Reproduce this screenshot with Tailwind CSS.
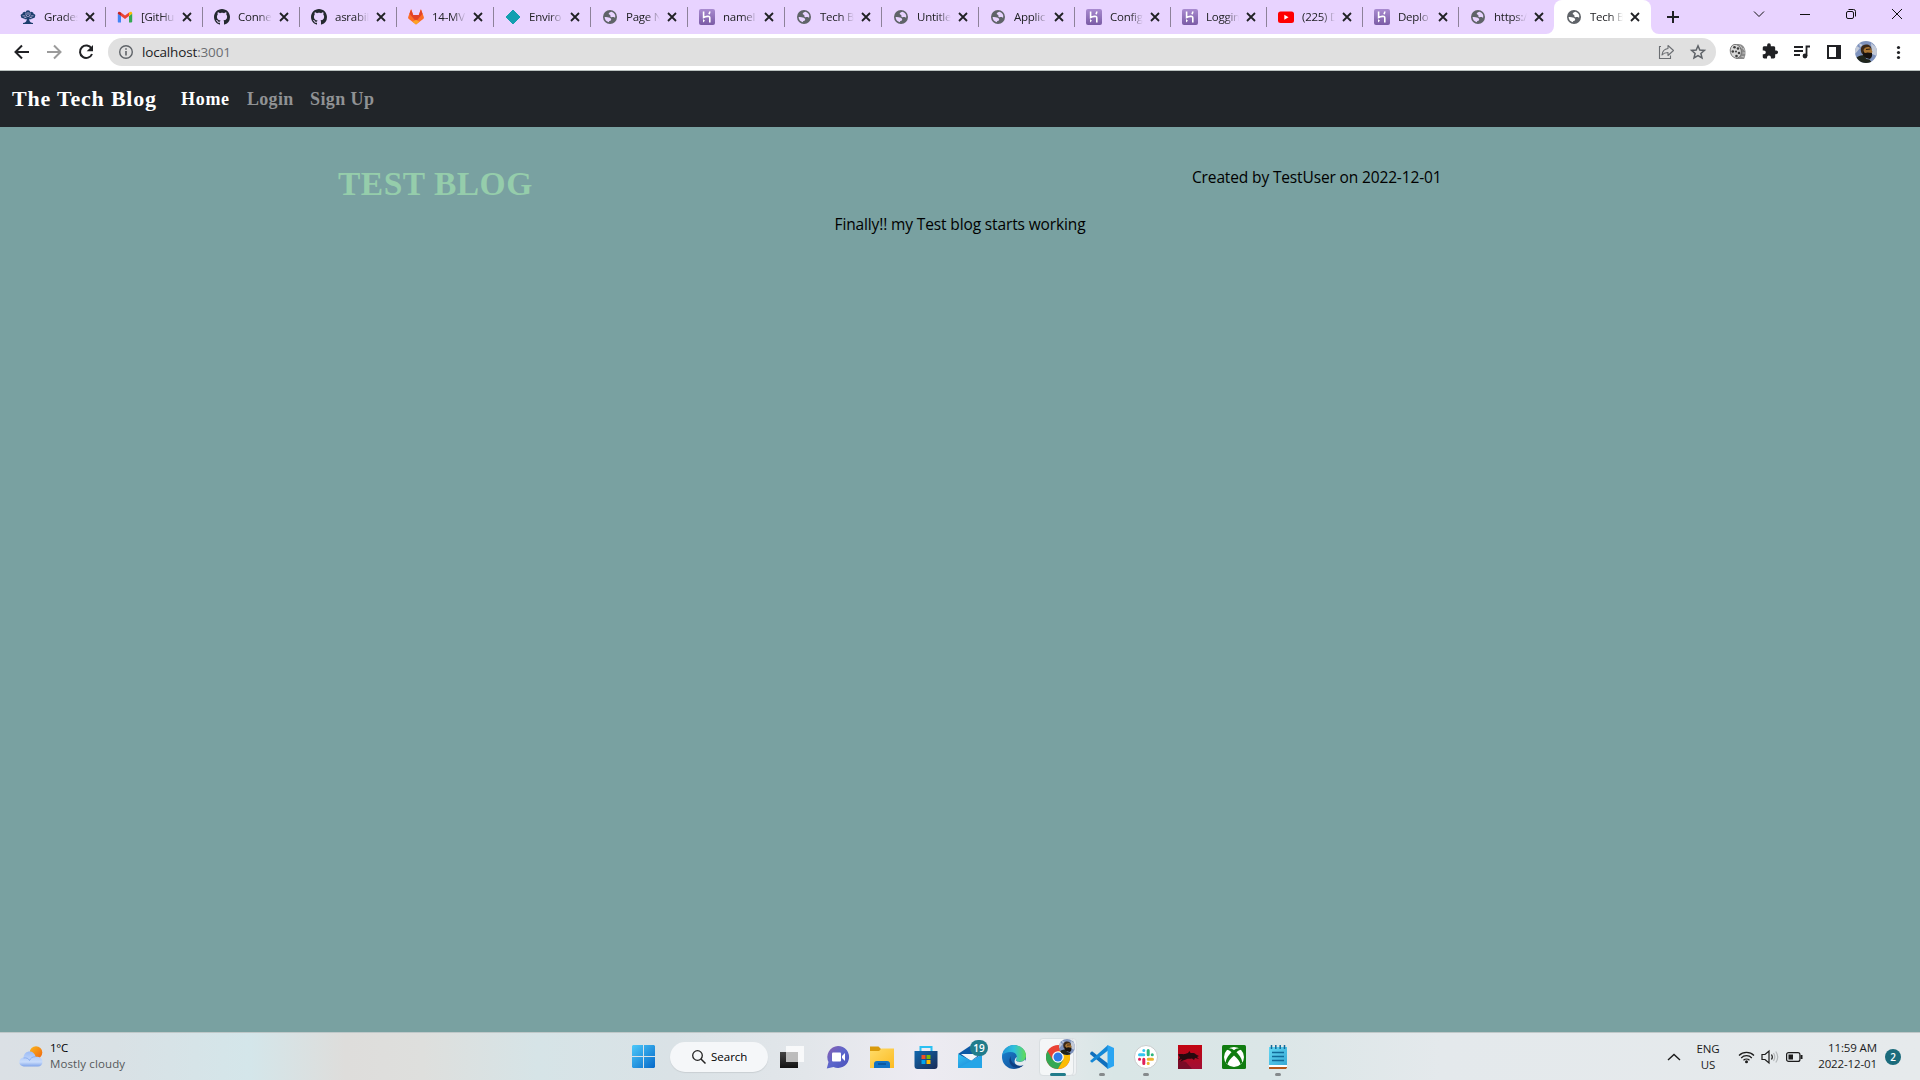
<!DOCTYPE html>
<html lang="en">
<head>
<meta charset="utf-8">
<title>Tech Blog</title>
<script src="https://cdn.jsdelivr.net/npm/@tailwindcss/browser@4"></script>
</head>
<body class="relative flex h-screen w-screen flex-col overflow-hidden bg-[#79a1a1] font-['Open_Sans','Noto_Sans',sans-serif] text-black">

<svg class="absolute size-0">
  <defs>
    <linearGradient id="hk" x1="0" y1="0" x2="0" y2="1"><stop offset="0" stop-color="#a98bd0"/><stop offset="1" stop-color="#7a5ba5"/></linearGradient>
    <linearGradient id="win" x1="0" y1="0" x2="1" y2="1"><stop offset="0" stop-color="#4cc9fa"/><stop offset="1" stop-color="#0669c9"/></linearGradient>
    <linearGradient id="sun" x1="0" y1="0" x2="1" y2="1"><stop offset="0" stop-color="#fbb81c"/><stop offset="1" stop-color="#f0640f"/></linearGradient>
    <linearGradient id="cloud" x1="0" y1="0" x2="0" y2="1"><stop offset="0" stop-color="#9dbcf5"/><stop offset=".7" stop-color="#c9dcfb"/><stop offset="1" stop-color="#7fa3ea"/></linearGradient>
    <linearGradient id="dark" x1="0" y1="0" x2="0" y2="1"><stop offset="0" stop-color="#454545"/><stop offset="1" stop-color="#111"/></linearGradient>
    <linearGradient id="chat" x1="0" y1="0" x2="1" y2="1"><stop offset="0" stop-color="#8d5fae"/><stop offset=".5" stop-color="#5b66cc"/><stop offset="1" stop-color="#4a50b8"/></linearGradient>
    <linearGradient id="fold" x1="0" y1="0" x2="1" y2="1"><stop offset="0" stop-color="#ffdc6a"/><stop offset="1" stop-color="#fcbb22"/></linearGradient>
    <linearGradient id="store" x1="0" y1="0" x2="1" y2="1"><stop offset="0" stop-color="#0f67ae"/><stop offset="1" stop-color="#1b2c56"/></linearGradient>
    <linearGradient id="mail" x1="0" y1="0" x2="1" y2="1"><stop offset="0" stop-color="#35c3f2"/><stop offset="1" stop-color="#1377d3"/></linearGradient>
    <linearGradient id="edge1" x1="0" y1="0" x2="1" y2="0"><stop offset="0" stop-color="#2196d8"/><stop offset=".5" stop-color="#2fc0dc"/><stop offset="1" stop-color="#62dc51"/></linearGradient>
    <linearGradient id="edge2" x1="0" y1="0" x2="1" y2="1"><stop offset="0" stop-color="#1a86d4"/><stop offset="1" stop-color="#11468f"/></linearGradient>
    <linearGradient id="note" x1="0" y1="0" x2="1" y2="1"><stop offset="0" stop-color="#62d7f3"/><stop offset="1" stop-color="#37a8d4"/></linearGradient>
    <linearGradient id="red" x1="0" y1="0" x2="0" y2="1"><stop offset="0" stop-color="#c40410"/><stop offset="1" stop-color="#a00f35"/></linearGradient>
    <clipPath id="round"><circle cx="11" cy="11" r="11"/></clipPath>
  </defs>
  <symbol id="i-globe" viewBox="0 0 16 16"><path fill="#5f6368" fill-rule="evenodd" d="M8 1a7 7 0 1 0 0 14A7 7 0 0 0 8 1zM9.600 2.700C8.300 3.100 6.800 3.600 6.700 4.800c0 1 1.100.8 1.600 1.400.4.600-.2 1.400.5 1.900.9.500 1.900-.3 2.800 0 .6.200.9.700 1.600.500A5.400 5.400 0 0 0 9.600 2.700zM2.600 8c0 2.600 1.800 4.800 4.500 5.300V12c.8-.2 1.700-.3 2-1.100.3-.9-.3-1.800-1.300-2.200C6.500 8.200 5 8.400 2.600 8z"/></symbol>
  <symbol id="i-git" viewBox="0 0 16 16"><path fill="#24292f" d="M8 0C3.58 0 0 3.58 0 8c0 3.54 2.290 6.530 5.470 7.590.4.070.55-.17.55-.38 0-.19-.01-.82-.01-1.490-2.010.37-2.530-.49-2.690-.94-.09-.23-.48-.94-.82-1.130-.28-.15-.68-.52-.01-.53.63-.01 1.080.58 1.230.82.72 1.210 1.870.87 2.330.66.07-.52.28-.87.51-1.070-1.780-.2-3.640-.89-3.640-3.950 0-.87.31-1.590.82-2.150-.08-.2-.36-1.020.08-2.120 0 0 .67-.21 2.200.82.64-.18 1.320-.27 2-.27.68 0 1.360.09 2 .27 1.530-1.040 2.200-.82 2.200-.82.44 1.100.16 1.920.08 2.120.51.56.82 1.270.82 2.150 0 3.070-1.870 3.750-3.650 3.950.29.25.54.73.54 1.480 0 1.070-.01 1.930-.01 2.200 0 .21.15.46.55.38A8.010 8.010 0 0 0 16 8c0-4.420-3.580-8-8-8z"/></symbol>
  <symbol id="i-heroku" viewBox="0 0 16 16"><rect width="16" height="16" rx="2" fill="url(#hk)"/><path d="M4.600 2.500v6c1.500-.8 6.200-2.300 6.200.3v4.700M10.800 2.500c0 1.100-.4 2-1 2.600" fill="none" stroke="#fff" stroke-width="1.600"/><path d="M4 10v3.500L6 11.750z" fill="#fff"/></symbol>
  <symbol id="i-tree" viewBox="0 0 16 16"><path fill="#1d3f6e" d="M5.800 3a2.200 1.800 0 0 1 4.400 0 2.300 1.500 0 0 1 3.300 1.700C15.200 5 15.800 6.300 15 7.300c.2 1.300-.9 2-2.300 1.900-.9 1.300-2.400 1.300-3.400.5.1 2.600.4 3.500 3.700 4.300v1H3v-1c3.300-.8 3.600-1.700 3.700-4.300-1 .8-2.500.8-3.400-.5C1.900 9.300.8 8.600 1 7.300.2 6.300.8 5 2.500 4.700A2.300 1.500 0 0 1 5.800 3z"/><path d="M6 3.500v2.200L7.600 8M10 3.500v2.200L8.400 8M2.500 6.800l3 .2M13.500 6.800l-3 .2M4 9l2.500-.8M12 9l-2.500-.8M8 3v3" stroke="#c9bde2" stroke-width=".8" fill="none"/></symbol>
  <symbol id="i-gmail" viewBox="0 0 16 16"><path fill="#4285f4" d="M1 13.500h3V7L.8 4.500v8.200z"/><path fill="#34a853" d="M12 13.500h2.500l.7-.8V4.500L12 7z"/><path fill="#ea4335" d="M4 7V3.500l4 3 4-3V7l-4 3z"/><path fill="#c5221f" d="M.8 4.700C.8 2.700 2.500 2.200 4 3.500V7L.8 4.700z"/><path fill="#fbbc04" d="M15.200 4.700c0-2-1.700-2.500-3.200-1.200V7l3.200-2.300z"/></symbol>
  <symbol id="i-gitlab" viewBox="0 0 16 16"><path fill="#fc6d26" d="M8 15.500.5 9.700C0 9.200 0 8.500.2 8L2.800.8c.1-.3.500-.3.600 0L5.200 6h5.600L12.600.8c.1-.3.500-.3.600 0L15.800 8c.2.500.2 1.200-.3 1.700z"/><path fill="#e24329" d="M8 12.500 5.200 6 3.100.6 1.500 4.800zM8 12.500 10.800 6 12.900.6l1.600 4.200zM5.200 6h5.600L8 12.500z"/><path fill="#fca326" d="m8 15.500-3.500-2.700L8 10.800l3.500 2z"/></symbol>
  <symbol id="i-diamond" viewBox="0 0 16 16"><path fill="#129fb0" stroke="#129fb0" stroke-linejoin="round" d="M8 1l7 7-7 7-7-7z"/></symbol>
  <symbol id="i-yt" viewBox="0 0 16 16"><rect y="2.500" width="16" height="11.500" rx="2.500" fill="#f00"/><path fill="#fff" d="M6.300 5.800v4.900l4.200-2.450z"/></symbol>
  <symbol id="i-face" viewBox="0 0 22 22"><g clip-path="url(#round)"><rect width="22" height="22" fill="#7d92bd"/><path d="M0 4l5 3-5 6zM4 2l4 2-3 2zM16 2l6 5v8l-5-2z" fill="#c3cad8"/><path d="M6.500 12C4.500 7 7 3.500 11 3.500c3.500 0 5.500 2 5.500 5l-2 4-4 4z" fill="#3a2818"/><path d="M8.500 9c1-3.500 6-4 7.500-1.500L17.500 11l-3 3-5-.5z" fill="#a87433"/><path d="M11 8.500l4.500-.5" stroke="#2d1c10"/><path d="M8 10c1 2.500 3 2 4.500 1.500l4.500.5c.5 3-.5 5.500-2.500 6L8 16z" fill="#17120f"/><path d="M1 17c3-2 5-3 7.500-2.500l3 3.500 3 .5L17 22H2z" fill="#20251c"/></g></symbol>
</svg>

<!-- tab strip -->
<header class="flex h-[34px] shrink-0 bg-[#e8d3ff] pl-2">
  <div id="tabs" class="flex"></div>
  <svg class="ml-[15px] mt-[10px] size-[14px]" viewBox="0 0 14 14"><path d="M7 1v12M1 7h12" stroke="#202124" stroke-width="2"/></svg>
  <div class="ml-auto flex h-7">
    <svg class="h-7 w-[46px]" viewBox="0 0 46 28"><path d="m18 11.500 5 5 5-5" fill="none" stroke="#111"/></svg>
    <svg class="h-7 w-[46px]" viewBox="0 0 46 28"><path d="M18 14.500h10" stroke="#111"/></svg>
    <svg class="h-7 w-[46px]" viewBox="0 0 46 28"><g fill="none" stroke="#111"><rect x="18.500" y="11.500" width="7" height="7" rx="1.500"/><path d="M20.500 9.500h5a2 2 0 0 1 2 2v5"/></g></svg>
    <svg class="h-7 w-[46px]" viewBox="0 0 46 28"><path d="m18 9 10 10M28 9 18 19" stroke="#111"/></svg>
  </div>
</header>

<!-- toolbar -->
<div class="flex h-9 shrink-0 items-center bg-white">
  <div class="ml-1.5 flex w-[102px]">
    <svg class="size-8" viewBox="0 0 32 32"><path d="M23 16H10M16 9.500 9.500 16l6.500 6.500" fill="none" stroke="#202124" stroke-width="2"/></svg>
    <svg class="size-8" viewBox="0 0 32 32"><path d="M9 16h13M16 9.500l6.500 6.500-6.500 6.500" fill="none" stroke="#9b9b9b" stroke-width="2"/></svg>
    <svg class="size-8" viewBox="0 0 32 32"><path d="M21.500 12.500A6.200 6.200 0 1 0 22 18" fill="none" stroke="#202124" stroke-width="2"/><path d="M23 9v6.300h-6.300z" fill="#202124"/></svg>
  </div>
  <div class="flex h-7 w-[1608px] items-center rounded-full bg-[#e0e0e0] pl-[11px] pr-0.5">
    <svg class="size-[14px]" viewBox="0 0 14 14"><circle cx="7" cy="7" r="6.300" fill="none" stroke="#5f6368" stroke-width="1.400"/><path d="M7 6v4.500M7 3.300v1.500" stroke="#5f6368" stroke-width="1.600"/></svg>
    <div class="ml-[9px] text-[13.500px] leading-5 tracking-[-0.16px] text-[#202124]">localhost<span class="text-[#6b6e72]">:3001</span></div>
    <svg class="ml-auto size-8" viewBox="0 0 32 32"><g fill="none" stroke="#6b6e72" stroke-width="1.100"><path d="M11 10.500H9.500v12h11v-3"/><path d="M18 9.500l5.500 5-5.500 5v-3c-2.500 0-4.500.7-6 2.500.3-3.500 2.500-6 6-6.500z" stroke-linejoin="round"/></g></svg>
    <svg class="size-8" viewBox="0 0 32 32"><path d="M16 9.800l1.800 4.200 4.600.4-3.500 3 1.100 4.500-4-2.400-4 2.400 1.100-4.500-3.500-3 4.600-.4z" fill="none" stroke="#5f6368" stroke-width="1.500"/></svg>
  </div>
  <div class="ml-1.5 flex">
    <svg class="size-8" viewBox="0 0 32 32"><path d="M14 8.500c5-1.500 9 1.500 9.500 7.500 0 3-.5 5.500-1.500 7l-8 0z" fill="#8a8a8a"/><ellipse cx="13.800" cy="15.300" rx="5.500" ry="7" transform="rotate(-14 13.800 15.300)" fill="#d8d8d8" stroke="#666" stroke-width=".8"/><g fill="#3d3d3d"><circle cx="14" cy="15.500" r="1"/><circle cx="12.500" cy="11.200" r="1.300"/><circle cx="16" cy="12.500" r="1.300"/><circle cx="17" cy="17" r="1.300"/><circle cx="14.500" cy="20" r="1.300"/><circle cx="10.800" cy="15.500" r="1.300"/></g><path d="M18 9.500l2 3M21 12l1.500 2.500M20.500 17h3M19.500 20.500l3 .5" stroke="#d5d5d5" stroke-width=".8"/></svg>
    <svg class="size-8" viewBox="0 0 32 32"><path transform="translate(7.300 6.500) scale(.73)" fill="#202124" d="M20.500 11H19V7c0-1.100-.9-2-2-2h-4V3.500a2.500 2.500 0 0 0-5 0V5H4c-1.100 0-2 .9-2 2v3.800h1.500a2.700 2.700 0 0 1 0 5.400H2V20c0 1.100.9 2 2 2h3.800v-1.500a2.700 2.700 0 0 1 5.400 0V22H17c1.100 0 2-.9 2-2v-4h1.500a2.500 2.500 0 0 0 0-5z"/></svg>
    <svg class="size-8" viewBox="0 0 32 32"><path d="M8 11h9M8 15h9M8 19h6M20.500 20v-9.500H24" fill="none" stroke="#202124" stroke-width="1.800"/><circle cx="19" cy="20" r="2.400" fill="#202124"/></svg>
    <svg class="size-8" viewBox="0 0 32 32"><path d="M9 9h14v14H9zM11 11v10h7V11z" fill-rule="evenodd" fill="#202124"/></svg>
    <div class="flex size-8 items-center justify-center"><svg class="size-[22px]"><use href="#i-face"/></svg></div>
    <svg class="size-8" viewBox="0 0 32 32"><g fill="#202124"><circle cx="16.500" cy="11.500" r="1.600"/><circle cx="16.500" cy="16.500" r="1.600"/><circle cx="16.500" cy="21.500" r="1.600"/></g></svg>
  </div>
</div>

<!-- site navigation -->
<nav class="flex h-[57px] shrink-0 items-center border-t border-[#b9c1bf] bg-[#212529] pl-3 font-['Liberation_Serif',serif] font-bold">
  <a class="w-[169px] text-[22px] leading-[30px] tracking-[0.8px] text-white">The Tech Blog</a>
  <a class="w-[66px] text-[18px] leading-6 tracking-[0.7px] text-white">Home</a>
  <a class="w-[63px] text-[18px] leading-6 tracking-[0.3px] text-[#909294]">Login</a>
  <a class="text-[18px] leading-6 tracking-[0.4px] text-[#909294]">Sign Up</a>
</nav>

<main class="grow bg-[#79a1a1]">
  <div class="flex pl-[338px] pt-[38px]">
    <h2 class="w-[854px] font-['Liberation_Serif',serif] text-[33.500px] font-bold leading-[38px] tracking-[0.5px] text-[#95cdab]">TEST BLOG</h2>
    <p class="text-[15.500px] leading-6 tracking-[-0.14px]">Created by TestUser on 2022-12-01</p>
  </div>
  <p class="mt-[9px] text-center text-[15.500px] leading-6 tracking-[-0.13px]">Finally!! my Test blog starts working</p>
</main>

<!-- taskbar -->
<footer class="flex h-12 shrink-0 items-center border-t border-[#c0c8c9] bg-[linear-gradient(90deg,#dbe0e5_0%,#d9e1e5_6%,#d4e6ea_13%,#dedddb_18%,#dedfdd_22%,#d6e4e7_28%,#dae2e6_35%,#e2e6ea_42%,#edebf2_48%,#e6e9ec_54%,#d9e6e6_58%,#dbe6e7_66%,#e4e9ec_75%,#e6eaec_100%)]">
  <div class="flex w-[621px] items-center self-stretch pl-[19px]">
    <svg class="h-[22px] w-6" viewBox="0 0 24 22"><circle cx="17" cy="6.500" r="6.300" fill="url(#sun)"/><path d="M5 20.500a4.500 4.500 0 0 1-.5-9C5 7.500 7.500 5.500 10.500 5.500s5.500 2 6 5.200c4-.3 7 1.800 7 5s-2 4.800-4.500 4.800z" fill="url(#cloud)"/><path d="M4.500 12c3-.5 5 .5 6 2.500 1-2.500 3-3.800 6-3.800" fill="none" stroke="#82a6ee" stroke-width=".8"/></svg>
    <div class="-mt-0.5 ml-[7px] text-[11.500px] leading-4"><p class="tracking-[-0.3px]">1°C</p><p class="tracking-[0.12px] text-[#55595b]">Mostly cloudy</p></div>
  </div>
  <div class="flex h-[47px] items-center">
    <div class="flex w-11 justify-center"><svg class="size-[23px]" viewBox="0 0 23 23"><path fill="url(#win)" d="M1 0H11v11H0V1zM12 0h10L23 1V11H12zM0 12h11v11H1L0 22zM12 12h11v10L22 23H12z"/></svg></div>
    <div class="ml-[5px] mr-1 flex h-[30px] w-[98px] items-center rounded-full bg-[#f5f7f9] pl-[22px] shadow-[0_1px_1px_#c9cfd3]"><svg class="size-[14px]" viewBox="0 0 14 14"><circle cx="5.500" cy="5.500" r="4.800" fill="none" stroke="#222" stroke-width="1.300"/><path d="m9 9 4.500 4.500" stroke="#222" stroke-width="1.500"/></svg><span class="ml-[5px] text-[11.500px] leading-4">Search</span></div>
    <div class="flex w-11 justify-center pr-1"><svg class="size-6" viewBox="0 0 24 24"><rect y="7" width="18" height="16" fill="url(#dark)"/><rect x="6" y="1" width="18" height="16" fill="#fff" fill-opacity=".75"/><path d="M6 7h12v10H6z" fill="#b5b5b5" fill-opacity=".7"/></svg></div>
    <div class="flex w-11 justify-center"><svg class="size-6" viewBox="0 0 24 24"><path fill="url(#chat)" d="M12 1a11 11 0 1 1-4.500 21L.8 23.500 2.500 17A11 11 0 0 1 12 1z"/><rect x="6" y="7.500" width="9" height="9" rx="1" fill="#fff"/><path fill="#fff" d="m16 11 3-3v8l-3-3z"/></svg></div>
    <div class="flex w-11 justify-center"><svg class="size-6" viewBox="0 0 24 24"><path fill="#d99a0c" d="M0 1.500h8.500L11 4v5H0z"/><path fill="url(#fold)" d="M0 6h9l2.500-2.500H24V23H0z"/><path fill="#1272c4" d="M4 23v-4a3 3 0 0 1 3-3h10a3 3 0 0 1 3 3v4z"/><path d="M8 19h8" stroke="#0a4f94" stroke-width="1.500"/></svg></div>
    <div class="flex w-11 justify-center"><svg class="size-6" viewBox="0 0 24 24"><path d="M6.500 6V2h11v4" fill="none" stroke="#2bc0f2" stroke-width="2"/><path fill="url(#store)" d="M.5 6h23v15a3 3 0 0 1-3 3h-17a3 3 0 0 1-3-3z"/><path fill="#f25022" d="M7.500 10h4v4h-4z"/><path fill="#7fba00" d="M12.500 10h4v4h-4z"/><path fill="#00a4ef" d="M7.500 15h4v4h-4z"/><path fill="#ffb900" d="M12.500 15h4v4h-4z"/></svg></div>
    <div class="relative flex w-11 justify-center"><svg class="size-6" viewBox="0 0 24 24"><path fill="#0c59a5" d="M0 9 12 1l12 8-12 8z"/><path fill="#f3f6fa" d="M3 9h19l-9 7z"/><path fill="url(#mail)" d="M0 9l14 7 10-7v14H0z"/><path fill="#25a5e7" d="M0 23 24 10v13z"/></svg><span class="absolute -top-[5px] left-[22px] flex h-4 w-[18px] items-center justify-center rounded-full bg-[#217c8b] text-[10px] font-semibold leading-none text-white">19</span></div>
    <div class="flex w-11 justify-center"><svg class="size-6" viewBox="0 0 24 24"><circle cx="12" cy="12" r="12" fill="url(#edge2)"/><path fill="url(#edge1)" d="M.2 10.500C1 4.500 6 0 12 0c7 0 12 5 12 10.500 0 4-2.800 6.300-6 6.300-3 0-4.500-1.300-4-2.500.5-.9 1-1.500.7-3.300C14.200 8.500 12 7 8.500 7 5 7 1.500 8.500.2 10.500z"/><path d="M9 11c-1.500 5 2.500 9.300 8.500 9.300 2 0 3.500-.5 4.700-1.300-.8 1.300-1.700 2.200-3 3C12 25 4 18.500 9 11z" fill="#0d3f83"/><path d="M14.500 12c.3.800 0 2-.6 2.700-.4.800 1.100 2.200 4 2.200 2 0 3.900-.9 5.100-2.500l1.200 2.800-1.700 2.200c-1.500 1-3 1.300-5 1.300-5 0-6.500-5-3-8.700z" fill="#e4eaee"/></svg></div>
    <div class="relative flex h-[38px] w-11 items-center justify-center"><div class="absolute left-[3px] top-0 h-[38px] w-[38px] rounded border border-[#dadfe2] bg-[#eef1f3]"></div><div class="absolute left-[3px] top-0 h-[38px] w-[35px] rounded border border-[#d9dee1] bg-[#f4f6f7]"></div>
      <svg class="relative size-6" viewBox="0 0 24 24"><circle cx="12" cy="12" r="12" fill="#ea4335"/><path fill="#34a853" d="M12 12 6.800 15 1.600 6A12 12 0 0 0 12 24l5.200-9z"/><path fill="#fbbc04" d="M12 6h10.400A12 12 0 0 1 12 24l5.200-9z"/><circle cx="12" cy="12" r="5.800" fill="#fff"/><circle cx="12" cy="12" r="4.500" fill="#2f7be8"/></svg>
      <svg class="absolute left-[23px] top-px size-4"><use href="#i-face"/></svg>
      <span class="absolute bottom-0 left-[14px] h-[3px] w-4 rounded-full bg-[#217c8b]"></span></div>
    <div class="relative flex h-[38px] w-11 items-center justify-center"><svg class="size-6" viewBox="0 0 24 24"><path fill="#0f6fbd" d="m0 8 2-1.700L18 18.500V24L.5 9.500z"/><path fill="#1588d6" d="M0 16l18-16v5.500L2 17.700z"/><path fill="#2aa5f2" d="m17.500 0 6.500 3v18l-6.500 3z"/></svg><span class="absolute bottom-0 left-[19px] h-[3px] w-1.5 rounded-full bg-[#858a8c]"></span></div>
    <div class="relative flex h-[38px] w-11 items-center justify-center"><svg class="size-6" viewBox="0 0 24 24"><circle cx="12" cy="12" r="11.500" fill="#fff" stroke="#c9cccd"/><g stroke-width="3" stroke-linecap="round"><path d="M9.800 5.500v.1M5.500 9.700h4.300" stroke="#36c5f0"/><path d="M14.200 5.500v4.200M18.300 9.700h-.1" stroke="#2eb67d"/><path d="M5.500 14.200h.1M9.800 14.200v4.200" stroke="#e01e5a"/><path d="M14.200 14.200h4.300M14.200 18.300v.1" stroke="#ecb22e"/></g></svg><span class="absolute bottom-0 left-[19px] h-[3px] w-1.5 rounded-full bg-[#858a8c]"></span></div>
    <div class="flex w-11 justify-center"><svg class="size-6" viewBox="0 0 24 24"><path fill="url(#red)" d="M0 0h24v24H0z"/><path fill="#26090e" d="M0 9.500c3-1 5 0 7-.5l3-1 1.500-2 1 2c2 0 4-.5 5.500 1.500l3 1.500-2 1 2 2-4-1-1 2-2-1.500c-3 1-4.500-.5-6 1l-3 1L2 17l2-3-4 1.500 2-3z"/><path fill="#5b0a22" fill-opacity=".6" d="M0 15l8 2 6 7H0z"/></svg></div>
    <div class="flex w-11 justify-center"><svg class="size-6" viewBox="0 0 24 24"><rect width="24" height="24" rx="1.500" fill="#107c10"/><circle cx="12" cy="12" r="10" fill="#fff"/><path fill="#107c10" d="M6 3.500C8.500 3 10.500 4 12 5.200 13.500 4 15.500 3 18 3.500l1.500 1.200c-1.500-.2-3.500.7-5 2.500 3.500 3.300 6 7.600 5.500 10.500l-1.500 1.500c-.5-2.500-3-5.500-6.500-8.700C8.500 13.700 6 16.700 5.500 19.200L4 17.700C3.500 14.800 6 10.500 9.500 7.200c-1.500-1.800-3.500-2.700-5-2.500z"/></svg></div>
    <div class="relative flex h-[38px] w-11 items-center justify-center"><svg class="size-6" viewBox="0 0 24 24"><path d="M3 21h18v1.500l-1 1.500H3z" fill="#b4581a"/><path fill="url(#note)" d="M3 2h18v19H3z"/><path fill="#fff" d="M3 20h18v2H3z"/><path d="M5.500 0v4M9.800 0v4M14.200 0v4M18.500 0v4" stroke="#116a99" stroke-width="1.500"/><path d="M6 7.500h12M6 11.500h12M6 15.500h12" stroke="#116a99" stroke-width="1.500"/></svg><span class="absolute bottom-0 left-[19px] h-[3px] w-1.5 rounded-full bg-[#858a8c]"></span></div>
  </div>
  <div class="ml-auto flex items-center pr-[19px] text-[11.500px] leading-4 text-[#1b1b1b]">
    <svg class="h-2 w-[14px]" viewBox="0 0 14 8"><path d="m1 7 6-5.500L13 7" fill="none" stroke="#1b1b1b" stroke-width="1.400"/></svg>
    <div class="ml-[13px] w-[28px] text-center tracking-[-0.2px]"><p>ENG</p><p>US</p></div>
    <svg class="ml-4 h-4 w-[17px]" viewBox="0 0 17 16"><g fill="none" stroke="#1b1b1b" stroke-width="1.200"><path d="M1 6.500a10.500 10.500 0 0 1 15 0M3.200 9a7.300 7.300 0 0 1 10.600 0M5.500 11.300a4.300 4.300 0 0 1 6 0"/></g><circle cx="8.500" cy="12.800" r="1.500" fill="#1b1b1b"/></svg>
    <svg class="ml-[6px] h-4 w-[18px]" viewBox="0 0 18 16"><g fill="none" stroke-width="1.200"><path d="M1 5.500h3l4-3.500v12l-4-3.500H1z" stroke="#1b1b1b"/><path d="M10.500 5.500c1 1.500 1 3.500 0 5" stroke="#1b1b1b"/><path d="M12.500 4c1.600 2.500 1.600 5.500 0 8M14.800 2.500c2.300 3.300 2.300 7.700 0 11" stroke="#b3b7b9"/></g></svg>
    <svg class="ml-[7px] h-3 w-[17px]" viewBox="0 0 17 12"><rect x=".6" y="1.600" width="13.300" height="8.800" rx="2" fill="none" stroke="#1b1b1b" stroke-width="1.200"/><path d="M2.500 3.500H7v5H2.500zM14.500 4h2v4h-2z" fill="#1b1b1b"/></svg>
    <div class="-mt-0.5 ml-[14px] w-[60px] whitespace-nowrap tracking-[-0.12px]"><p class="flex justify-end">11:59 AM</p><p class="flex justify-end">2022-12-01</p></div>
    <span class="ml-2 flex size-4 items-center justify-center rounded-full bg-[#1b6b7c] text-[10px] font-semibold leading-none text-white">2</span>
  </div>
</footer>

<script>
  const tabs = [
    ['tree', 'Grades'], ['gmail', '[GitHu'], ['git', 'Conne'], ['git', 'asrabil'], ['gitlab', '14-MV'],
    ['diamond', 'Enviro'], ['globe', 'Page N'], ['heroku', 'namel'], ['globe', 'Tech B'], ['globe', 'Untitle'],
    ['globe', 'Applic'], ['heroku', 'Config'], ['heroku', 'Loggin'], ['yt', '(225) D'], ['heroku', 'Deplo'],
    ['globe', 'https:/'], ['globe', 'Tech B']
  ];
  const corner = '<svg class="absolute bottom-0 -left-2 size-2" viewBox="0 0 8 8"><path d="M8 0v8H0a8 8 0 0 0 8-8z" fill="#fff"/></svg>' +
    '<svg class="absolute bottom-0 -right-2 size-2" viewBox="0 0 8 8"><path d="M0 0v8h8a8 8 0 0 1-8-8z" fill="#fff"/></svg>';
  document.getElementById('tabs').innerHTML = tabs.map(([icon, label], i) => {
    const active = i === tabs.length - 1;
    const width = i < 10 || active ? 'w-[97px]' : 'w-[96px]';
    const labelWidth = i < 10 ? 'w-[34px]' : 'w-[33px]';
    return `<div class="relative flex h-[34px] shrink-0 items-center pl-3 ${width} ${active ? 'rounded-t-lg bg-white' : ''}">
      ${i && !active ? '<span class="absolute left-0 top-[7px] h-5 w-px bg-[#8d8299]"></span>' : ''}${active ? corner : ''}
      <svg class="size-4 shrink-0"><use href="#i-${icon}"/></svg>
      <span class="ml-2 ${labelWidth} shrink-0 overflow-hidden whitespace-nowrap mask-r-from-60% mask-r-to-100% text-[11.500px] leading-4 tracking-[-0.25px] text-[#202124]">${label}</span>
      <svg class="ml-[7px] size-[10px] shrink-0" viewBox="0 0 10 10"><path d="m1 1 8 8M9 1 1 9" stroke="#202124" stroke-width="1.800"/></svg>
    </div>`;
  }).join('');
</script>
</body>
</html>
